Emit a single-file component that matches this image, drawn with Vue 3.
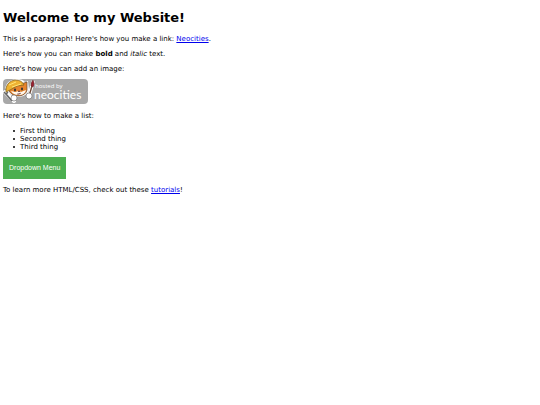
<template>
  <main class="page">
    <h1 class="page__title">Welcome to my Website!</h1>

    <p>This is a paragraph! Here's how you make a link: <a href="#neocities">Neocities</a>.</p>
    <p>Here's how you can make <strong>bold</strong> and <em>italic</em> text.</p>
    <p>Here's how you can add an image:</p>

    <!-- Hosting badge -->
    <svg class="badge" viewBox="0 0 85 25" role="img" aria-label="Hosted by Neocities">
      <rect width="85" height="25" rx="4" fill="#a8a8a8" />
      <!-- wrench -->
      <path d="M2 13l9 9" stroke="#fff" stroke-width="4" stroke-linecap="round" />
      <path d="M1 13l2 2 2-2M3 15l6 7" fill="none" stroke="#666" stroke-width="1.6" />
      <!-- cat head -->
      <path d="M2 9Q4 1 13 0q7 0 9 3l3-1 1 9q-2 6-10 7-8 0-11-5z" fill="#fff" />
      <path d="M6 9l15-5 3-1v8q-1 5-8 6-7 0-10-5z" fill="#e6842d" stroke="#63422b" stroke-width=".7" />
      <path d="M8 12l4 1 4-1 2 1 5-2q-1 5-7 5-6 0-8-4z" fill="#fff8ed" />
      <path d="M3 9Q5 2 12 1q7 0 9 5l-7 1-7 4-4 2z" fill="#eeb232" stroke="#86651f" stroke-width=".8" />
      <path d="M6 6l7-3m-4 5l9-3" stroke="#ffe477" stroke-width="1" />
      <ellipse cx="12" cy="11" rx="1" ry="1.4" fill="#333" />
      <ellipse cx="19" cy="10" rx="1" ry="1.4" fill="#333" />
      <path d="M15 12h2l-1 1zM14 15q2 1 4-1" fill="#633" stroke="#633" stroke-width=".5" />
      <!-- brush -->
      <path d="M30 3l-4 14" stroke="#fff" stroke-width="3.5" stroke-linecap="round" />
      <path d="M29 7l-3 10" stroke="#704a38" stroke-width="1.4" />
      <path d="M28 7q0-4 2-6 2 4 0 7z" fill="#9e2030" stroke="#5c2327" stroke-width=".6" />
      <!-- paws -->
      <circle cx="11" cy="19" r="3" fill="#fff" stroke="#666" stroke-width=".6" />
      <circle cx="26" cy="17" r="3" fill="#fff" stroke="#666" stroke-width=".6" />
      <text class="badge__small" x="32" y="9">hosted by</text>
      <text class="badge__name" x="31" y="20">neocities</text>
    </svg>

    <p>Here's how to make a list:</p>

    <ul class="list">
      <li v-for="item in items" :key="item" class="list__item">{{ item }}</li>
    </ul>

    <button class="dropdown" type="button">Dropdown Menu</button>

    <p>To learn more HTML/CSS, check out these <a href="#tutorials">tutorials</a>!</p>
  </main>
</template>

<script setup>
const items = ['First thing', 'Second thing', 'Third thing']
</script>

<style>
body {
  background: #ffffff;
}
</style>

<style scoped>
.page {
  padding: 9px 3px;
  color: #000000;
  font-family: Verdana, "DejaVu Sans", sans-serif;
  font-size: 7px;
  line-height: 8px;
}

.page__title {
  margin: 0 0 9px;
  font-size: 13px;
  line-height: 17px;
}

p {
  margin: 7px 0;
}

a {
  color: #0000ee;
}

/* Badge */
.badge {
  display: block;
  width: 85px;
  height: 25px;
  margin: -1px 0 8px;
}

.badge text {
  fill: #ffffff;
}

.badge .badge__small {
  font-family: "Open Sans", sans-serif;
  font-size: 6px;
}

.badge .badge__name {
  font-family: Lato, sans-serif;
  font-size: 12px;
}

/* List */
.list {
  margin: 7px 0 6px;
  padding-left: 10px;
  list-style: none;
}

.list__item {
  display: flex;
  align-items: center;
  gap: 5px;
}

.list__item::before {
  width: 2px;
  height: 2px;
  border-radius: 1px;
  background: #000000;
  content: "";
}

/* Menu button */
.dropdown {
  display: block;
  padding: 7px 6px;
  border: 0;
  background: #4caf50;
  color: #ffffff;
  font-family: "Liberation Sans", Arial, sans-serif;
  font-size: 7px;
  line-height: 8px;
  cursor: pointer;
}
</style>
